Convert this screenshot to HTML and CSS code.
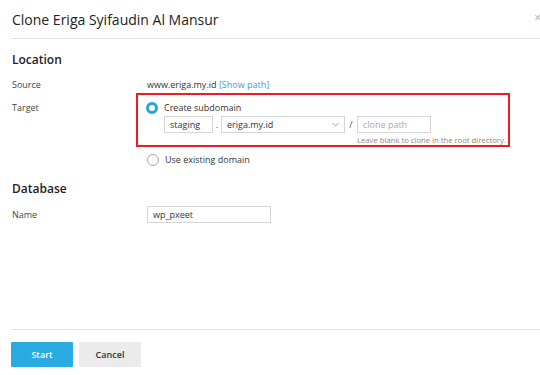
FILE: index.html
```html
<!DOCTYPE html>
<html>
<head>
<meta charset="utf-8">
<link rel="stylesheet" href="styles.css">
</head>
<body>
<div class="dialog">
  <div class="header">
    <h1 class="title">Clone Eriga Syifaudin Al Mansur</h1>
    <span class="close">×</span>
  </div>
  <div class="content">
    <h2 class="section">Location</h2>
    <div class="row row-source">
      <div class="label">Source</div>
      <div class="value">www.eriga.my.id <a class="link">[Show path]</a></div>
    </div>
    <div class="row row-target">
      <div class="label">Target</div>
      <div class="value">
        <div class="highlight">
          <div class="radio-line">
            <span class="radio checked"></span>
            <span>Create subdomain</span>
          </div>
          <div class="inputs">
            <span class="input sub">staging</span>
            <span class="sep">.</span>
            <span class="input select">eriga.my.id
              <svg class="chev" width="7" height="5" viewBox="0 0 7 5"><path d="M0.5 1 L3.5 4 L6.5 1" fill="none" stroke="#999" stroke-width="0.9"/></svg>
            </span>
            <span class="sep slash">/</span>
            <div class="pathcol">
              <span class="input path">clone path</span>
              <div class="hint">Leave blank to clone in the root directory.</div>
            </div>
          </div>
        </div>
        <div class="radio-line other">
          <span class="radio"></span>
          <span>Use existing domain</span>
        </div>
      </div>
    </div>
    <h2 class="section db">Database</h2>
    <div class="row row-name">
      <div class="label">Name</div>
      <div class="value"><span class="input name">wp_pxeet</span></div>
    </div>
  </div>
  <div class="footer">
    <button class="btn primary">Start</button>
    <button class="btn">Cancel</button>
  </div>
</div>
</body>
</html>
```
FILE: styles.css
```css
html, body {
  margin: 0;
  padding: 0;
  background: #fff;
  overflow: hidden;
}
body {
  font-family: "Open Sans", "DejaVu Sans", sans-serif;
  color: #333;
  font-size: 9px;
}
.dialog {
  width: 560px;
  height: 375px;
  padding-left: 11px;
  box-sizing: border-box;
  display: flex;
  flex-direction: column;
}
.header {
  height: 39px;
  border-bottom: 1px solid #e3e3e8;
  display: flex;
  align-items: center;
  justify-content: space-between;
  box-sizing: border-box;
  padding-left: 1px;
}
.title {
  margin: 0;
  font-size: 14px;
  font-weight: 400;
  color: #222;
  padding-top: 1px;
}
.close {
  color: #aaa;
  font-size: 12px;
  margin-right: 19px;
  margin-top: -3px;
}
.content {
  padding-left: 1px;
  flex: 1;
}
.section {
  margin: 13px 0 0;
  font-size: 12px;
  font-weight: 600;
  color: #222;
  line-height: 16px;
}
.section.db {
  margin-top: 15px;
}
.row {
  display: flex;
  line-height: 13px;
}
.row-source {
  margin-top: 10px;
}
.label {
  width: 135px;
  color: #444;
}
.value {
  color: #333;
}
.link {
  color: #3a9fd5;
}
.row-target {
  margin-top: 2px;
}
.row-target .label {
  padding-top: 8px;
}
.highlight {
  border: 2px solid #ee1b24;
  width: 374px;
  height: 54px;
  box-sizing: border-box;
  margin-left: -11px;
  padding: 6px 0 0 8px;
}
.radio-line {
  display: flex;
  align-items: center;
  gap: 6px;
  height: 13px;
}
.radio {
  width: 12px;
  height: 12px;
  border-radius: 50%;
  border: 1px solid #a8a8a8;
  box-sizing: border-box;
  background: #fff;
}
.radio.checked {
  border: 3.5px solid #25a2dc;
}
.radio-line.other {
  margin-top: 6px;
}
.inputs {
  display: flex;
  align-items: flex-start;
  margin: 2px 0 0 18px;
}
.input {
  display: inline-flex;
  align-items: center;
  box-sizing: border-box;
  height: 17px;
  border: 1px solid #d6d6d6;
  padding: 0 5px;
  color: #333;
  background: #fff;
}
.input.sub {
  width: 49px;
}
.input.select {
  width: 124px;
  justify-content: space-between;
  padding-right: 5px;
}
.chev {
  display: block;
}
.sep {
  width: 8px;
  text-align: center;
  line-height: 17px;
  color: #555;
}
.sep.slash {
  width: 12px;
}
.input.path {
  width: 74px;
  color: #aaa;
}
.pathcol {
  display: flex;
  flex-direction: column;
}
.hint {
  font-size: 7.7px;
  line-height: 11px;
  color: #888;
  margin-top: 2px;
  white-space: nowrap;
}
.row-name {
  margin-top: 9px;
  align-items: center;
}
.input.name {
  width: 124px;
}
.footer {
  border-top: 1px solid #e3e3e8;
  height: 46px;
  display: flex;
  align-items: flex-start;
  gap: 6px;
  padding-top: 12px;
  box-sizing: border-box;
}
.btn {
  font-family: "Open Sans", "DejaVu Sans", sans-serif;
  font-size: 9px;
  font-weight: 600;
  height: 25px;
  width: 62px;
  border: none;
  border-radius: 1px;
  background: #ebebeb;
  color: #333;
  padding: 0;
}
.btn.primary {
  background: #29abe2;
  color: #fff;
}
```
